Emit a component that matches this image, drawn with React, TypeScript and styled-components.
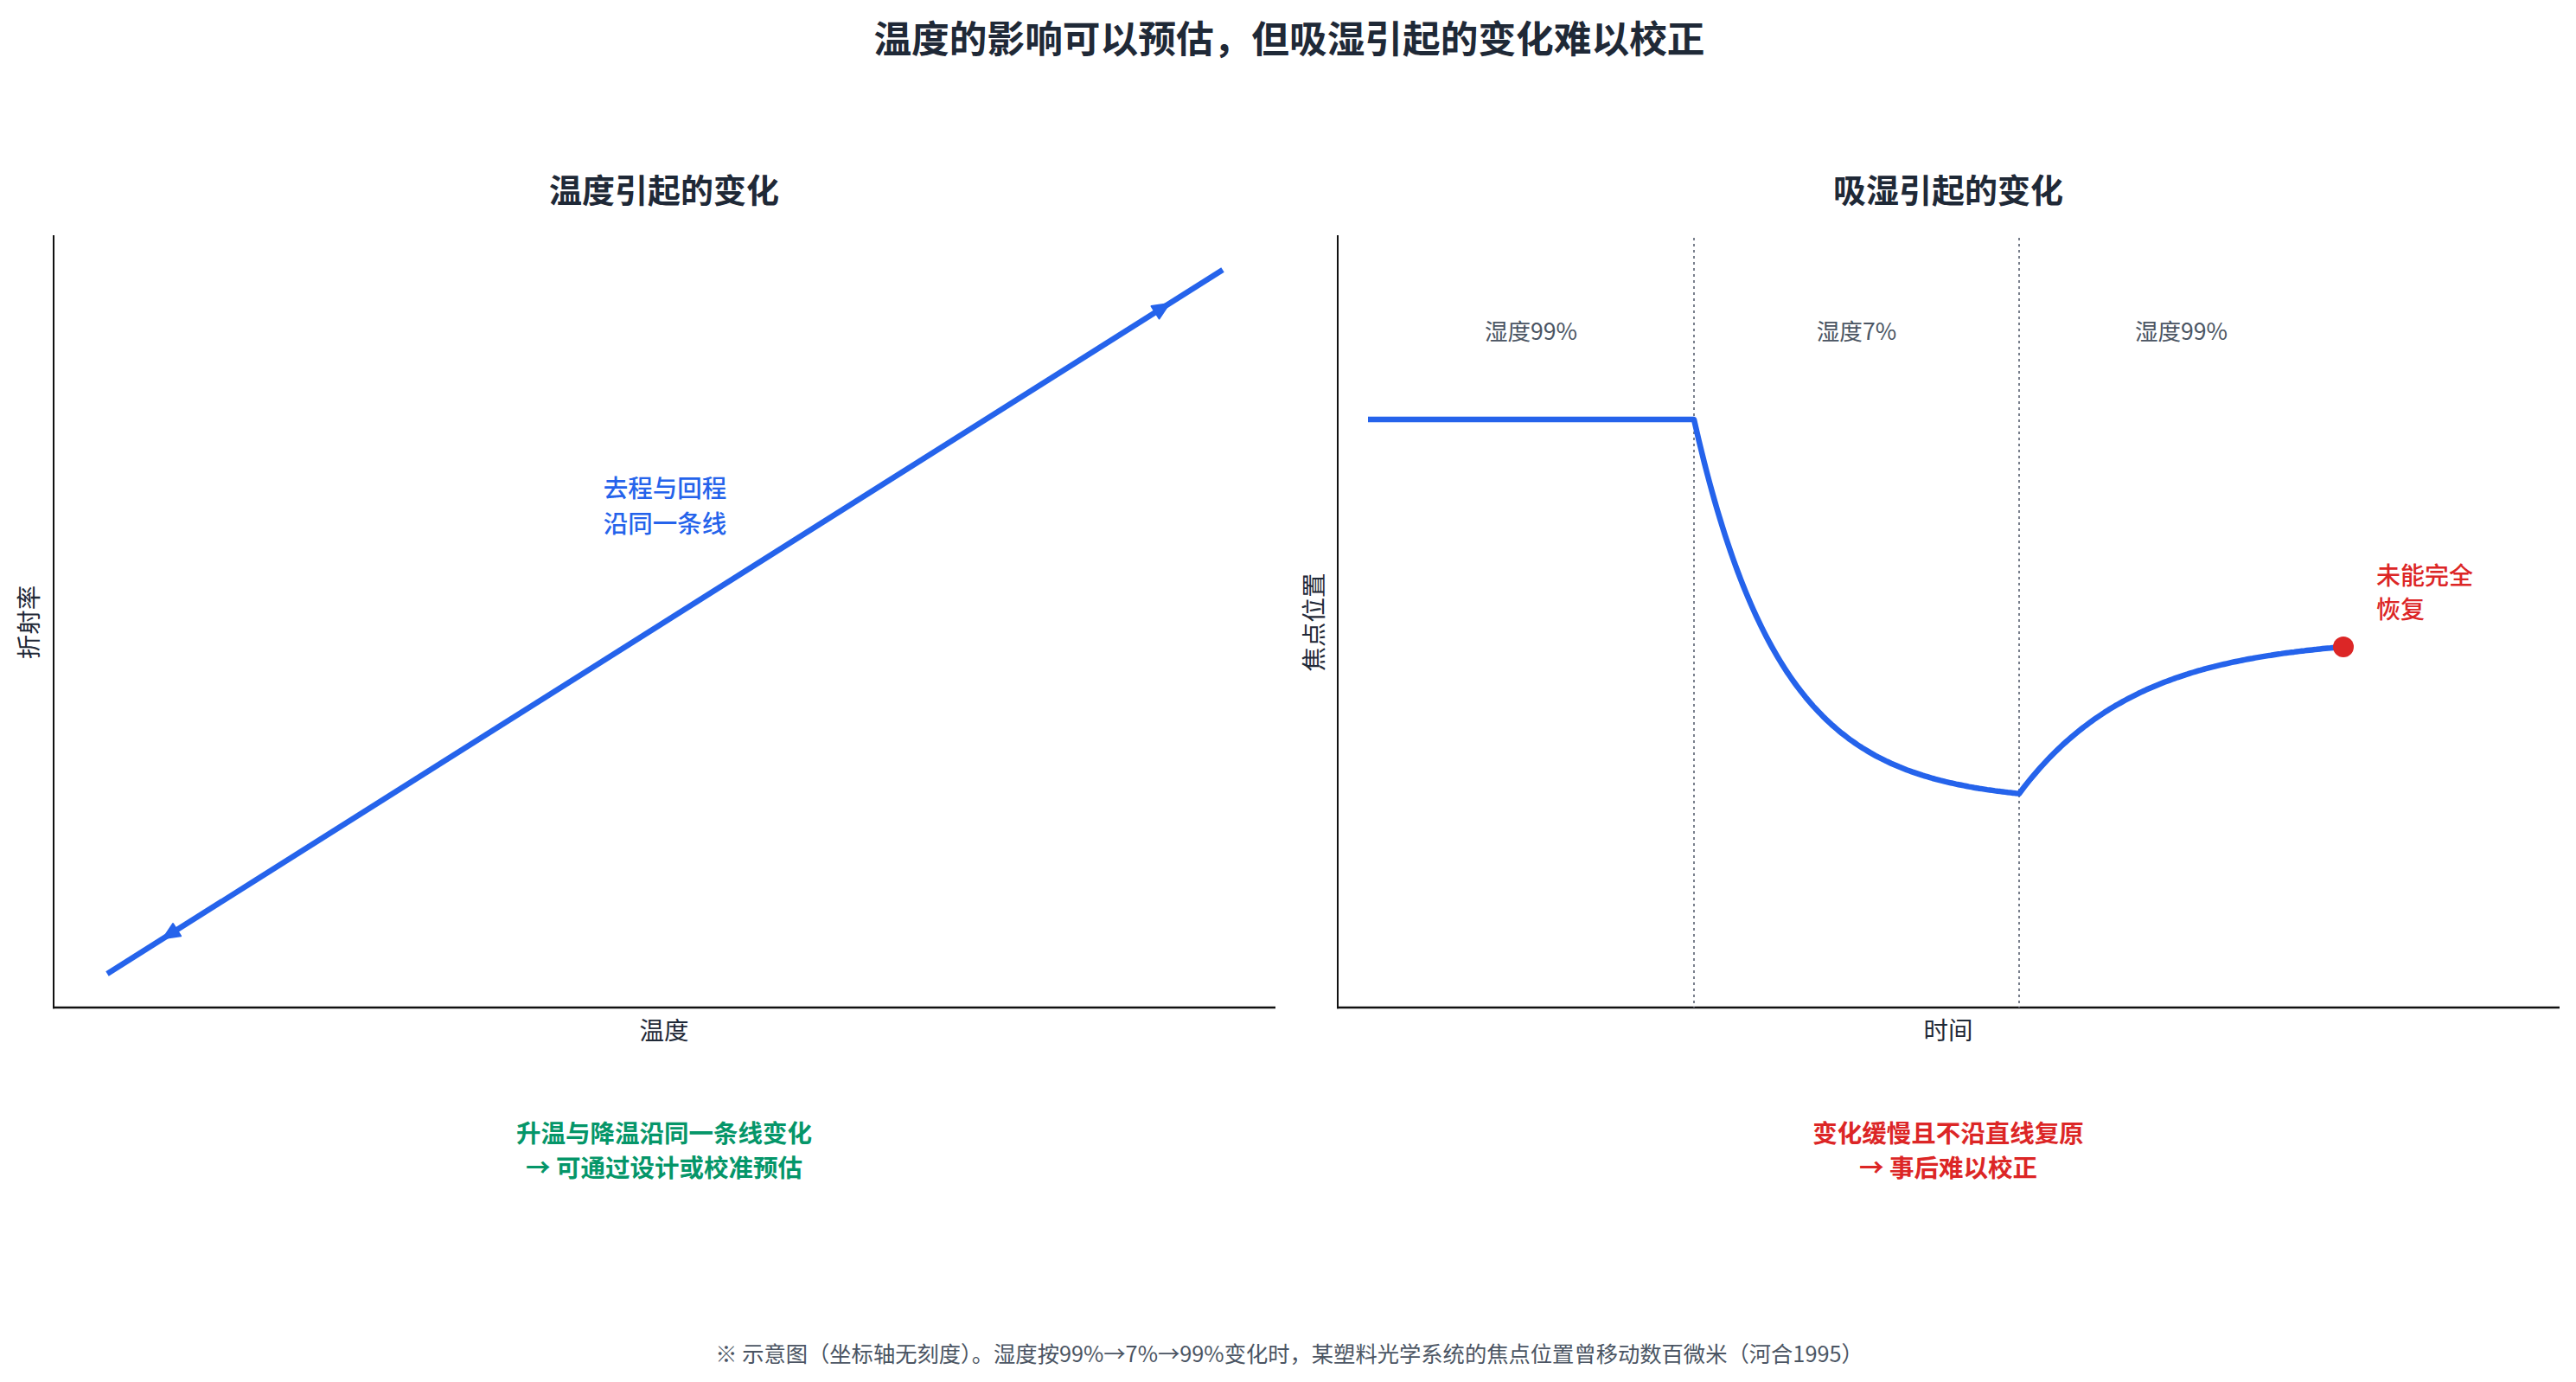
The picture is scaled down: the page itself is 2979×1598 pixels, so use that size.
import React from 'react';
import styled, { createGlobalStyle } from 'styled-components';

const BLUE = '#2563eb';
const RED = '#dc2626';
const GREEN = '#059669';
const INK = '#1f2937';
const GREY = '#4b5563';

const GlobalStyle = createGlobalStyle`
  html, body {
    margin: 0;
    padding: 0;
    background: #fff;
  }
  body {
    font-family: "Noto Sans CJK SC", "Noto Sans", sans-serif;
  }
`;

const Page = styled.div`
  width: 2979px;
  height: 1598px;
  box-sizing: border-box;
  padding-left: 3px;
  display: flex;
  flex-direction: column;
  overflow: hidden;
`;

const Title = styled.h1`
  margin: 0;
  height: 84px;
  line-height: 84px;
  text-align: center;
  font-size: 43.7px;
  font-weight: 700;
  color: ${INK};
`;

const Panels = styled.div`
  display: flex;
  gap: 13px;
  margin-top: 109px;
`;

const Panel = styled.section`
  display: grid;
  grid-template-columns: 58px 1414px;
`;

const Subtitle = styled.h2`
  grid-column: 2;
  margin: 0 0 29px;
  height: 50px;
  line-height: 50px;
  text-align: center;
  font-size: 38px;
  font-weight: 700;
  color: ${INK};
`;

const YLabel = styled.div`
  grid-column: 1;
  display: flex;
  align-items: center;
  justify-content: center;

  span {
    display: block;
    transform: rotate(-90deg);
    white-space: nowrap;
    font-size: 28.5px;
    color: ${INK};
  }
`;

const Plot = styled.svg`
  grid-column: 2;
  display: block;
  width: 1414px;
  height: 895px;
  overflow: visible;
`;

const XLabel = styled.div`
  grid-column: 2;
  margin-top: 5px;
  height: 36px;
  line-height: 36px;
  text-align: center;
  font-size: 28.5px;
  color: ${INK};
`;

const Caption = styled.div<{ tone: string }>`
  grid-column: 2;
  margin-top: 81px;
  text-align: center;
  font-size: 28.5px;
  line-height: 40px;
  font-weight: 700;
  color: ${p => p.tone};
`;

const Footer = styled.footer`
  margin-top: 180px;
  height: 30px;
  line-height: 30px;
  text-align: center;
  font-size: 25.3px;
  color: ${GREY};
`;

const AXIS_Y = 893;

// little filled triangle at a tip, pointing along (ux, uy)
const arrowHead = (tx: number, ty: number, ux: number, uy: number) => {
  const len = 19;
  const half = 8.5;
  const bx = tx - ux * len;
  const by = ty - uy * len;
  const nx = -uy;
  const ny = ux;
  return `${tx},${ty} ${bx + nx * half},${by + ny * half} ${bx - nx * half},${by - ny * half}`;
};

const Axes: React.FC = () => (
  <g stroke="#111" fill="none">
    <line x1={1} y1={0} x2={1} y2={AXIS_Y + 1.2} strokeWidth={2} />
    <line x1={0} y1={AXIS_Y} x2={1414} y2={AXIS_Y} strokeWidth={2.6} />
  </g>
);

const TemperatureChart: React.FC = () => {
  const start = { x: 63, y: 854 };
  const end = { x: 1353, y: 40 };
  const dx = end.x - start.x;
  const dy = end.y - start.y;
  const len = Math.hypot(dx, dy);
  const ux = dx / len;
  const uy = dy / len;
  const at = (t: number) => ({ x: start.x + dx * t, y: start.y + dy * t });
  const up = at(0.952);
  const down = at(0.05);

  return (
    <Plot viewBox="0 0 1414 895">
      <Axes />
      <line
        x1={start.x}
        y1={start.y}
        x2={end.x}
        y2={end.y}
        stroke={BLUE}
        strokeWidth={6.5}
      />
      <polygon points={arrowHead(up.x, up.y, ux, uy)} fill={BLUE} strokeLinejoin="round" stroke={BLUE} strokeWidth={2} />
      <polygon points={arrowHead(down.x, down.y, -ux, -uy)} fill={BLUE} strokeLinejoin="round" stroke={BLUE} strokeWidth={2} />
      <g fill={BLUE} fontSize={28.5} fontWeight={500} textAnchor="middle" dominantBaseline="central">
        <text x={708} y={290}>去程与回程</text>
        <text x={708} y={331}>沿同一条线</text>
      </g>
    </Plot>
  );
};

const HumidityChart: React.FC = () => {
  const x0 = 36;
  const x1 = 413;
  const x2 = 789;
  const x3 = 1164;
  const top = 213;

  const pts: string[] = [`${x0},${top}`, `${x1},${top}`];
  for (let x = x1 + 3; x <= x2; x += 3) {
    const y = top + 443 * (1 - Math.exp(-(x - x1) / 100));
    pts.push(`${x},${y.toFixed(1)}`);
  }
  const low = top + 443 * (1 - Math.exp(-(x2 - x1) / 100));
  for (let x = x2; x <= x3; x += 3) {
    const y = low - 181 * (1 - Math.exp(-(x - x2) / 135));
    pts.push(`${x},${y.toFixed(1)}`);
  }
  const endY = low - 181 * (1 - Math.exp(-(x3 - x2) / 135));
  pts.push(`${x3},${endY.toFixed(1)}`);

  const zones = [
    { cx: (x0 + x1) / 2, label: '湿度99%' },
    { cx: (x1 + x2) / 2, label: '湿度7%' },
    { cx: (x2 + x3) / 2, label: '湿度99%' },
  ];

  return (
    <Plot viewBox="0 0 1414 895">
      <Axes />
      {[x1, x2].map(x => (
        <line
          key={x}
          x1={x}
          y1={3}
          x2={x}
          y2={AXIS_Y}
          stroke="#6b7280"
          strokeWidth={1.8}
          strokeDasharray="3 4"
        />
      ))}
      <g fill={GREY} fontSize={26.6} textAnchor="middle" dominantBaseline="central">
        {zones.map(z => (
          <text key={z.cx} x={z.cx} y={109}>{z.label}</text>
        ))}
      </g>
      <polyline
        points={pts.join(' ')}
        fill="none"
        stroke={BLUE}
        strokeWidth={6.5}
        strokeLinejoin="round"
      />
      <circle cx={x3} cy={endY} r={12} fill={RED} />
      <g fill={RED} fontSize={28} fontWeight={500} dominantBaseline="central">
        <text x={1202} y={392}>未能完全</text>
        <text x={1202} y={431}>恢复</text>
      </g>
    </Plot>
  );
};

const App: React.FC = () => (
  <>
    <GlobalStyle />
    <Page>
      <Title>温度的影响可以预估，但吸湿引起的变化难以校正</Title>
      <Panels>
        <Panel>
          <Subtitle>温度引起的变化</Subtitle>
          <YLabel><span>折射率</span></YLabel>
          <TemperatureChart />
          <XLabel>温度</XLabel>
          <Caption tone={GREEN}>
            升温与降温沿同一条线变化
            <br />→ 可通过设计或校准预估
          </Caption>
        </Panel>
        <Panel>
          <Subtitle>吸湿引起的变化</Subtitle>
          <YLabel><span>焦点位置</span></YLabel>
          <HumidityChart />
          <XLabel>时间</XLabel>
          <Caption tone={RED}>
            变化缓慢且不沿直线复原
            <br />→ 事后难以校正
          </Caption>
        </Panel>
      </Panels>
      <Footer>
        ※ 示意图（坐标轴无刻度）。湿度按99%→7%→99%变化时，某塑料光学系统的焦点位置曾移动数百微米（河合1995）
      </Footer>
    </Page>
  </>
);

export default App;
